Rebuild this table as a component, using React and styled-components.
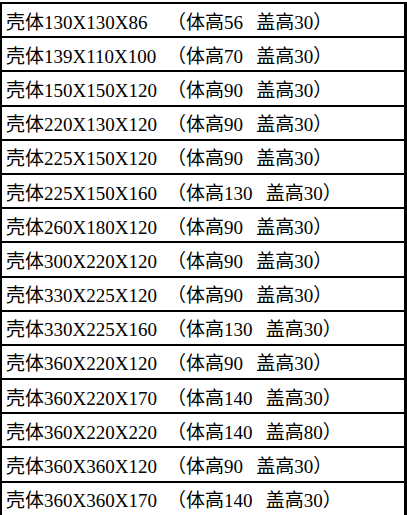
import styled, { createGlobalStyle } from "styled-components";

const GlobalStyle = createGlobalStyle`
  html, body {
    margin: 0;
    padding: 0;
    background: #ffffff;
  }
`;

const Sheet = styled.div`
  width: 407px;
  margin-top: 2px;
  box-sizing: border-box;
  border-top: 2px solid #000;
  border-left: 2px solid #000;
  border-right: 3px solid #000;
  font-family: "Liberation Serif", "Noto Sans CJK SC", serif;
  font-size: 19px;
  color: #000;
`;

const Row = styled.div`
  display: grid;
  grid-template-columns: 161px 1fr;
  align-items: center;
  height: 34.2px;
  box-sizing: border-box;
  padding-left: 4px;
  border-bottom: 2px solid #000;
  white-space: nowrap;
`;

const Name = styled.span``;

const Note = styled.span`
  word-spacing: 0.45em;
`;

const rows = [
  ["130X130X86", "56", "30"],
  ["139X110X100", "70", "30"],
  ["150X150X120", "90", "30"],
  ["220X130X120", "90", "30"],
  ["225X150X120", "90", "30"],
  ["225X150X160", "130", "30"],
  ["260X180X120", "90", "30"],
  ["300X220X120", "90", "30"],
  ["330X225X120", "90", "30"],
  ["330X225X160", "130", "30"],
  ["360X220X120", "90", "30"],
  ["360X220X170", "140", "30"],
  ["360X220X220", "140", "80"],
  ["360X360X120", "90", "30"],
  ["360X360X170", "140", "30"],
];

export default function App() {
  return (
    <>
      <GlobalStyle />
      <Sheet>
        {rows.map(([size, body, lid]) => (
          <Row key={size}>
            <Name>壳体{size}</Name>
            <Note>（体高{body} 盖高{lid}）</Note>
          </Row>
        ))}
      </Sheet>
    </>
  );
}
